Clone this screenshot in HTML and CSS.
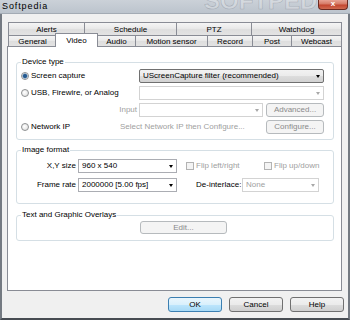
FILE: index.html
```html
<!DOCTYPE html>
<html>
<head>
<meta charset="utf-8">
<link rel="stylesheet" href="styles.css">
</head>
<body>
<div class="window">
  <div class="titlebar">
    <span class="title">Softpedia</span>
    <span class="watermark">SOFTPEDIA</span>
    <span class="close">x</span>
  </div>
  <div class="frame">
    <div class="tabs">
      <div class="tabrow row1">
        <div class="tab">Alerts</div>
        <div class="tab">Schedule</div>
        <div class="tab">PTZ</div>
        <div class="tab last">Watchdog</div>
      </div>
      <div class="tabrow row2">
        <div class="tab">General</div>
        <div class="tab sel">Video</div>
        <div class="tab">Audio</div>
        <div class="tab">Motion sensor</div>
        <div class="tab">Record</div>
        <div class="tab">Post</div>
        <div class="tab last">Webcast</div>
      </div>
    </div>
    <div class="panel">
      <div class="group g-device">
        <div class="legend">Device type</div>
        <div class="row">
          <div class="opt w118"><span class="radio on"></span>Screen capture</div>
          <div class="combo list w185"><span class="val">UScreenCapture filter (recommended)</span><span class="arrow"></span></div>
        </div>
        <div class="row">
          <div class="opt w118"><span class="radio"></span>USB, Firewire, or Analog</div>
          <div class="combo dis w185"><span class="val"></span><span class="arrow"></span></div>
        </div>
        <div class="row">
          <div class="cap dim w118 pr2">Input</div>
          <div class="combo dis w124"><span class="val"></span><span class="arrow"></span></div>
          <div class="btn dis w58 ml3">Advanced...</div>
        </div>
        <div class="row">
          <div class="opt w99"><span class="radio"></span>Network IP</div>
          <span class="dim">Select Network IP then Configure...</span>
          <div class="btn dis w58 mlauto">Configure...</div>
        </div>
      </div>
      <div class="group g-image">
        <div class="legend">Image format</div>
        <div class="row">
          <div class="cap w55">X,Y size</div>
          <div class="combo edit w99 ml2"><span class="val">960 x 540</span><span class="arrow"></span></div>
          <div class="check w78 ml9"><span class="cbox"></span>Flip left/right</div>
          <div class="check"><span class="cbox"></span>Flip up/down</div>
        </div>
        <div class="row">
          <div class="cap w55">Frame rate</div>
          <div class="combo edit w99 ml2"><span class="val">2000000 [5.00 fps]</span><span class="arrow"></span></div>
          <div class="lbl w46 ml19">De-interlace:</div>
          <div class="combo dis w77"><span class="val">None</span><span class="arrow"></span></div>
        </div>
      </div>
      <div class="group g-over">
        <div class="legend">Text and Graphic Overlays</div>
        <div class="row">
          <div class="btn dis w87 ml119">Edit...</div>
        </div>
      </div>
    </div>
    <div class="buttons">
      <div class="btn default">OK</div>
      <div class="btn">Cancel</div>
      <div class="btn">Help</div>
    </div>
  </div>
</div>
</body>
</html>
```

FILE: styles.css
```css
* { box-sizing: border-box; }
html, body { margin: 0; padding: 0; }
body {
  width: 350px; height: 320px; overflow: hidden;
  background: #f0f0f0;
  font-family: "Liberation Sans", Arial, sans-serif;
  font-size: 8px; line-height: 10px; color: #000;
}
.window { width: 350px; height: 320px; display: flex; flex-direction: column; background: #f0f0f0; }

.titlebar {
  position: relative; flex: none; height: 14px;
  display: flex; align-items: flex-start;
  background: linear-gradient(#cbd1d8, #bcc4cd);
  border-bottom: 1px solid #a3abb4;
  overflow: hidden;
}
.title { font-size: 9px; letter-spacing: 0.9px; line-height: 11px; padding: 1px 0 0 2px; color: #000; }
.watermark {
  position: absolute; left: 204px; top: -11px; width: 113px; overflow: hidden; white-space: nowrap;
  font-size: 24px; line-height: 24px; font-weight: bold;
  color: rgba(255,255,255,0.22);
  -webkit-text-stroke: 0.6px rgba(95,105,118,0.35);
}
.close {
  position: relative; z-index: 1;
  margin-left: auto; margin-right: 2px; width: 30px; height: 10px;
  border: 1px solid #6b2a21; border-top: none; border-radius: 0 0 4px 4px;
  background: linear-gradient(#e7a394, #d57a66 45%, #c2452f 55%, #cf6a50);
  color: #fff; font-weight: bold; font-size: 8px; line-height: 8px; text-align: center;
}

.frame {
  flex: 1; display: flex; flex-direction: column;
  border-left: 2px solid #747a82; border-right: 2px solid #747a82; border-bottom: 2px solid #474c52;
  padding: 8px 6px 0 5px;
}

.tabs { display: flex; flex-direction: column; margin-left: 1px; }
.tabrow { display: grid; }
.row1 { grid-template-columns: 76px 92px 75px 91px; height: 13px; }
.row2 { grid-template-columns: 48px 41px 38px 72px 45px 39px 51px; height: 11px; }
.tab {
  border-top: 1px solid #898c95; border-left: 1px solid #898c95;
  background: linear-gradient(#f5f5f5, #e9e9e9 45%, #dedede 55%, #e3e3e3);
  display: flex; align-items: center; justify-content: center;
  white-space: nowrap; line-height: 9px;
}
.tab.last { border-right: 1px solid #898c95; }
.tab.sel {
  position: relative; z-index: 2;
  margin: -2px -1px -1px -1px;
  background: #fff; border-right: 1px solid #898c95;
}

.panel {
  position: relative; z-index: 1; flex: none; height: 245px;
  border: 1px solid #898c95; background: #fff;
  padding: 15px 7px 0 8px;
}

.group {
  border: 1px solid #d5dfe5; border-radius: 3px;
  display: flex; flex-direction: column;
  padding: 0 9px 5px 4px;
}
.legend {
  align-self: flex-start; margin-top: -6px;
  padding: 0 1px; background: #fff; height: 10px; line-height: 10px;
}
.row { display: flex; align-items: center; height: 14px; flex: none; white-space: nowrap; }
.g-device .row { margin-top: 3px; }
.g-device .legend + .row { margin-top: 2px; }
.g-image { margin-top: 10px; padding-bottom: 11px; }
.g-image .row { margin-top: 5px; }
.g-image .legend + .row { margin-top: 4px; }
.g-over { margin-top: 11px; padding-bottom: 6px; }
.g-over .row { margin-top: 1px; height: 13px; }

.opt, .check { display: flex; align-items: center; }
.cap { text-align: right; }
.dim, .check { color: #a0a0a0; }
.pr2 { padding-right: 2px; }
.radio {
  flex: none; width: 8px; height: 8px; margin-right: 2px; border-radius: 50%;
  border: 1px solid #8e9092;
  background: radial-gradient(circle at 40% 40%, #ffffff, #dcdcdc);
}
.radio.on {
  background: radial-gradient(circle, #2a66a0 0, #1d4f84 1.4px, #7fa9cf 2.4px, #eaeaea 2.8px, #f6f6f6 100%);
}
.cbox {
  flex: none; width: 8px; height: 8px; margin-right: 2px;
  border: 1px solid #b3b3b3; background: #f4f4f4;
}

.combo {
  height: 14px; display: flex; align-items: center;
  border: 1px solid #abadb3; background: #fff;
  padding: 0 2px 0 3px;
}
.combo .val { flex: 1; overflow: hidden; white-space: nowrap; }
.combo.list {
  border-color: #707070; border-radius: 2px;
  background: linear-gradient(#f2f2f2, #ebebeb 50%, #dddddd 50%, #d2d2d2);
}
.combo.dis { border-color: #d3d3d3; color: #a0a0a0; }
.arrow {
  flex: none; width: 0; height: 0; margin-right: 1px;
  border-left: 2px solid transparent; border-right: 2px solid transparent;
  border-top: 3px solid #000;
}
.combo.dis .arrow { border-top-color: #a8a8a8; }

.btn {
  height: 14px; display: flex; align-items: center; justify-content: center;
  border: 1px solid #707070; border-radius: 3px;
  background: linear-gradient(#f2f2f2, #ebebeb 50%, #dddddd 50%, #cfcfcf);
  color: #000; white-space: nowrap;
}
.btn.dis { border-color: #b6babd; background: #f4f4f4; color: #8a8a8a; }
.g-over .btn { height: 13px; }
.btn.default {
  border-color: #3c7fb1;
  background: linear-gradient(#eaf6fd, #d9f0fc 50%, #bee6fd 50%, #a7d9f5);
}
.buttons { display: flex; justify-content: flex-end; gap: 7px; margin-top: 6px; margin-right: -2px; }
.buttons .btn { width: 54px; height: 15px; }

.w46 { width: 46px; flex: none; }
.w55 { width: 55px; flex: none; }
.w58 { width: 58px; flex: none; }
.w77 { width: 77px; flex: none; }
.w78 { width: 78px; flex: none; }
.w87 { width: 87px; flex: none; }
.w99 { width: 99px; flex: none; }
.w118 { width: 118px; flex: none; }
.w124 { width: 124px; flex: none; }
.w185 { width: 185px; flex: none; }
.ml2 { margin-left: 2px; }
.ml3 { margin-left: 3px; }
.ml9 { margin-left: 9px; }
.ml19 { margin-left: 19px; }
.ml119 { margin-left: 119px; }
.mlauto { margin-left: auto; }
```
